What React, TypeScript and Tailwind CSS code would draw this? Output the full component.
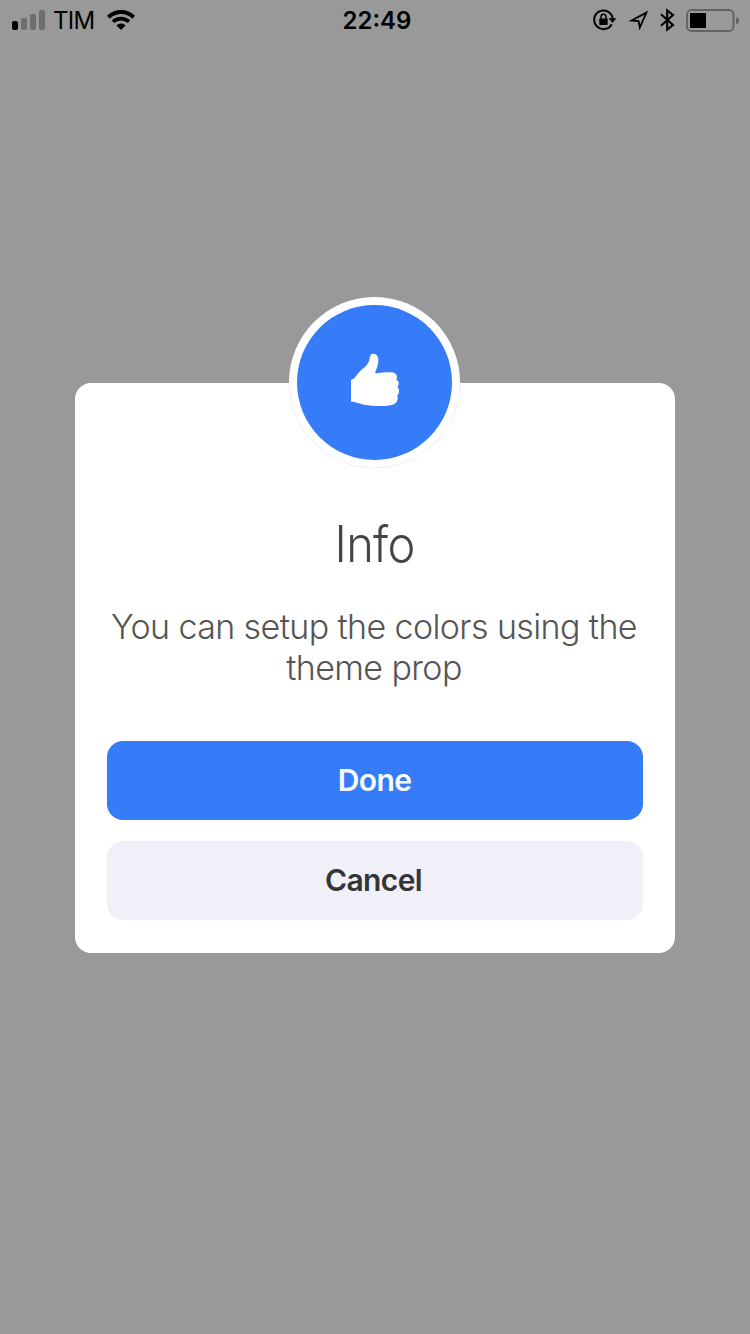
import React from "react";

function SignalIcon() {
  return (
    <svg width="34" height="20" viewBox="0 0 34 20" className="block">
      <rect x="0" y="11" width="6" height="9" rx="2" fill="#000" />
      <rect x="9" y="8" width="6" height="12" rx="2" fill="#6e6e6e" />
      <rect x="18" y="4" width="6" height="16" rx="2" fill="#6e6e6e" />
      <rect x="27" y="0" width="6" height="20" rx="2" fill="#6e6e6e" />
    </svg>
  );
}

function WifiIcon() {
  return (
    <svg width="28" height="20" viewBox="0 0 28 20" className="block" fill="none" stroke="#000">
      <path d="M1.4 7.2 A18 18 0 0 1 26.6 7.2" strokeWidth="4" />
      <path d="M6 11.8 A11.6 11.6 0 0 1 22 11.8" strokeWidth="3.6" />
      <path d="M14 20 L9.4 15.4 A6.6 6.6 0 0 1 18.6 15.4 Z" fill="#000" stroke="none" />
    </svg>
  );
}

function RotationLockIcon() {
  return (
    <svg width="24" height="22" viewBox="0 0 24 22" className="block">
      <path d="M18.700 15.200 A9.300 9.300 0 1 1 19.700 9.600" fill="none" stroke="#000" strokeWidth="2" />
      <path d="M15.600 9.300 H23.400 L19.500 14 Z" fill="#000" />
      <rect x="6.300" y="9.500" width="8.400" height="6.500" rx="0.800" fill="#000" />
      <path d="M8 10 V7.800 A2.500 2.600 0 0 1 13 7.800 V10" fill="none" stroke="#000" strokeWidth="1.500" />
    </svg>
  );
}

function LocationIcon() {
  return (
    <svg width="20" height="20" viewBox="0 0 20 20" className="block">
      <path
        d="M2.600 10.500 L17.400 2.600 L10.800 17.500 L9.600 11 Z"
        fill="none"
        stroke="#000"
        strokeWidth="1.8"
        strokeLinejoin="miter"
      />
    </svg>
  );
}

function BluetoothIcon() {
  return (
    <svg width="15" height="24" viewBox="0 0 15 24" className="block">
      <path
        d="M1 6.200 L13 17 L7.200 21.600 V2.400 L13 7 L1 17.800"
        fill="none"
        stroke="#000"
        strokeWidth="2.1"
      />
    </svg>
  );
}

function BatteryIcon() {
  return (
    <svg width="54" height="24" viewBox="0 0 54 24" className="block">
      <rect x="1" y="1" width="46.5" height="21" rx="4.5" fill="none" stroke="#636363" strokeWidth="1.9" />
      <rect x="4" y="4" width="16" height="15" fill="#000" />
      <path d="M50.2 8 Q53 9.4 53 11.7 Q53 14 50.2 15.4 Z" fill="#5c5c5c" />
    </svg>
  );
}

function ThumbsUpIcon() {
  return (
    <svg width="70" height="70" viewBox="0 0 210 210" className="block">
      <path
        fill="#fff"
        d="M33 104.500 C41 104.500 45 97 50 91 C56 82 63 75 72 68 C82 60 87 52 88.500 42 C89.500 32 92 26 100 26 C110 26 115 34 115 46 C115 58 111 69 106.500 79 C105 83 106 85.500 110 85 C124 82.500 138 82 151 82 C163 82 171 87 171 96 C171 100 170 103 168 105 C173 106 176 109 176 114 C176 120 175 124 172 127 C176 130 177.500 134 177 139 C177 145 175 149 171 152 C174 156 174 160 172 165 C169 178 158 180 142 182 C121 184.500 91 182 72 179 C56 176 48 170 33 170 Z"
      />
    </svg>
  );
}

export default function App() {
  return (
    <div className="flex h-[1334px] w-[750px] flex-col overflow-hidden bg-[#999999] font-['Inter','Liberation_Sans',sans-serif]">
      <header className="grid h-10 grid-cols-3 text-black">
        <div className="flex h-10 items-center pl-3">
          <SignalIcon />
          <span className="ml-[7px] pt-0.5 text-[24px] leading-10 tracking-[-0.7px]">TIM</span>
          <span className="ml-3">
            <WifiIcon />
          </span>
        </div>
        <div className="pt-px pl-1 text-center text-[24px] leading-10 font-semibold">22:49</div>
        <div className="flex h-10 items-center justify-end pr-[11px]">
          <RotationLockIcon />
          <span className="ml-3">
            <LocationIcon />
          </span>
          <span className="ml-[11px]">
            <BluetoothIcon />
          </span>
          <span className="-mr-[1px] ml-[11px] pt-px">
            <BatteryIcon />
          </span>
        </div>
      </header>

      <main className="mt-[343px] ml-[75px] flex h-[570px] w-[600px] flex-col items-center rounded-[16px] bg-white px-8">
        <div className="-mt-[86px] mr-px flex size-[171px] shrink-0 items-center justify-center rounded-full bg-[#8db4fa]">
          <div className="flex size-[170.4px] items-center justify-center rounded-full bg-white">
            <div className="flex size-[155px] items-center justify-center rounded-full bg-[#367bf7] pb-[5px] pl-px">
              <ThumbsUpIcon />
            </div>
          </div>
        </div>
        <h1 className="mt-[46px] scale-x-[0.94] pr-0.5 text-[50px] leading-[60px] font-[350] tracking-[-0.8px] text-[#454545]">
          Info
        </h1>
        <p className="mt-8 mr-0.5 text-center text-[34px] leading-[41px] font-[350] tracking-[-0.6px] whitespace-nowrap text-[#555555]">
          You can setup the colors using the
          <br />
          theme prop
        </p>
        <button className="mt-[53px] h-[79px] w-full shrink-0 rounded-[16px] bg-[#367bf7] pr-px text-[30px] font-semibold tracking-[-0.6px] text-[#f8fbff]">
          Done
        </button>
        <button className="mt-[21px] h-[79px] w-full shrink-0 rounded-[16px] bg-[#f0f0f9] pr-[3px] text-[30px] font-semibold tracking-[-0.6px] text-[#353535]">
          Cancel
        </button>
      </main>
    </div>
  );
}
